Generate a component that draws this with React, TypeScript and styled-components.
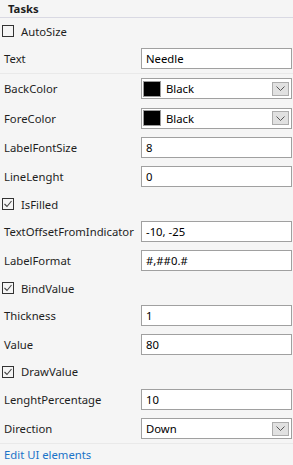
import React from 'react';
import styled, { createGlobalStyle } from 'styled-components';

const GlobalStyle = createGlobalStyle`
  html, body {
    margin: 0;
    padding: 0;
    background: #f5f5f5;
  }
  body {
    font-family: "Noto Sans", "Open Sans", sans-serif;
    font-size: 11.3px;
    color: #1e1e1e;
  }
`;

// --- panel layout ---
const Panel = styled.div`
  width: 293px;
  height: 465px;
  background: #f5f5f5;
  display: flex;
  flex-direction: column;
  overflow: hidden;
`;

const Header = styled.div`
  height: 17px;
  border-bottom: 1px solid #d9d9e3;
  display: flex;
  align-items: center;
  padding-left: 8px;
  font-weight: 700;
  color: #1e1e1e;
`;

const Row = styled.div<{ $check?: boolean; $first?: boolean }>`
  height: ${(p) => (p.$first ? '26px' : p.$check ? '25.3px' : '29.3px')};
  flex-shrink: 0;
  display: flex;
  align-items: center;
  padding: 0 1px 0 ${(p) => (p.$check ? '2px' : '4px')};
  box-sizing: border-box;
`;

const Divider = styled.div`
  height: 1px;
  flex-shrink: 0;
  background: #e9e9e9;
`;

const Label = styled.div`
  width: 137px;
  flex-shrink: 0;
  white-space: nowrap;
`;

const TextBox = styled.div`
  flex: 1;
  height: 21px;
  box-sizing: border-box;
  border: 1px solid #a0a0a0;
  background: #fff;
  display: flex;
  align-items: center;
  padding-left: 4px;
  color: #000;
  white-space: nowrap;
`;

const SelectBox = styled(TextBox)`
  padding: 0 2px 0 1px;
  gap: 5px;
`;

const Swatch = styled.div<{ $color: string }>`
  width: 18px;
  height: 16px;
  box-sizing: border-box;
  border: 1px solid #9a9a9a;
  background: ${(p) => p.$color};
  flex-shrink: 0;
`;

const SelectText = styled.span<{ $pad?: boolean }>`
  flex: 1;
  padding-left: ${(p) => (p.$pad ? '3px' : '0')};
`;

const DropButton = styled.div`
  width: 17px;
  height: 14px;
  box-sizing: border-box;
  border: 1px solid #adadad;
  background: #e1e1e1;
  display: flex;
  align-items: center;
  justify-content: center;
  flex-shrink: 0;
`;

const CheckLabel = styled.label`
  display: flex;
  align-items: center;
  gap: 7px;
`;

const Box = styled.div`
  width: 12px;
  height: 12px;
  box-sizing: border-box;
  border: 1px solid #333;
  background: #f5f5f5;
  display: flex;
  align-items: center;
  justify-content: center;
`;

const Footer = styled.div`
  border-top: 1px solid #e9e9e9;
  padding: 3px 0 0 4px;
  color: #1a73c8;
`;

const Chevron = () => (
  <svg width="9" height="5" viewBox="0 0 9 5">
    <path d="M0.5 0.5 L4.5 4.5 L8.5 0.5" fill="none" stroke="#555" strokeWidth="1" />
  </svg>
);

const Tick = () => (
  <svg width="10" height="10" viewBox="0 0 10 10">
    <path d="M1.5 5 L4 7.5 L8.5 2" fill="none" stroke="#444" strokeWidth="1.1" />
  </svg>
);

type Item =
  | { kind: 'check'; label: string; checked: boolean }
  | { kind: 'text'; label: string; value: string }
  | { kind: 'color'; label: string; value: string; color: string }
  | { kind: 'select'; label: string; value: string };

const items: Item[] = [
  { kind: 'check', label: 'AutoSize', checked: false },
  { kind: 'text', label: 'Text', value: 'Needle' },
  { kind: 'color', label: 'BackColor', value: 'Black', color: '#000' },
  { kind: 'color', label: 'ForeColor', value: 'Black', color: '#000' },
  { kind: 'text', label: 'LabelFontSize', value: '8' },
  { kind: 'text', label: 'LineLenght', value: '0' },
  { kind: 'check', label: 'IsFilled', checked: true },
  { kind: 'text', label: 'TextOffsetFromIndicator', value: '-10, -25' },
  { kind: 'text', label: 'LabelFormat', value: '#,##0.#' },
  { kind: 'check', label: 'BindValue', checked: true },
  { kind: 'text', label: 'Thickness', value: '1' },
  { kind: 'text', label: 'Value', value: '80' },
  { kind: 'check', label: 'DrawValue', checked: true },
  { kind: 'text', label: 'LenghtPercentage', value: '10' },
  { kind: 'select', label: 'Direction', value: 'Down' },
];

const renderItem = (item: Item, i: number) => {
  if (item.kind === 'check') {
    return (
      <Row key={i} $check $first={i === 0}>
        <CheckLabel>
          <Box>{item.checked && <Tick />}</Box>
          {item.label}
        </CheckLabel>
      </Row>
    );
  }
  return (
    <React.Fragment key={i}>
      <Row>
        <Label>{item.label}</Label>
        {item.kind === 'text' && <TextBox>{item.value}</TextBox>}
        {item.kind === 'color' && (
          <SelectBox>
            <Swatch $color={item.color} />
            <SelectText>{item.value}</SelectText>
            <DropButton>
              <Chevron />
            </DropButton>
          </SelectBox>
        )}
        {item.kind === 'select' && (
          <SelectBox>
            <SelectText $pad>{item.value}</SelectText>
            <DropButton>
              <Chevron />
            </DropButton>
          </SelectBox>
        )}
      </Row>
      {item.label === 'Text' && <Divider />}
    </React.Fragment>
  );
};

export default function App() {
  return (
    <>
      <GlobalStyle />
      <Panel>
        <Header>Tasks</Header>
        {items.map(renderItem)}
        <Footer>Edit UI elements</Footer>
      </Panel>
    </>
  );
}
